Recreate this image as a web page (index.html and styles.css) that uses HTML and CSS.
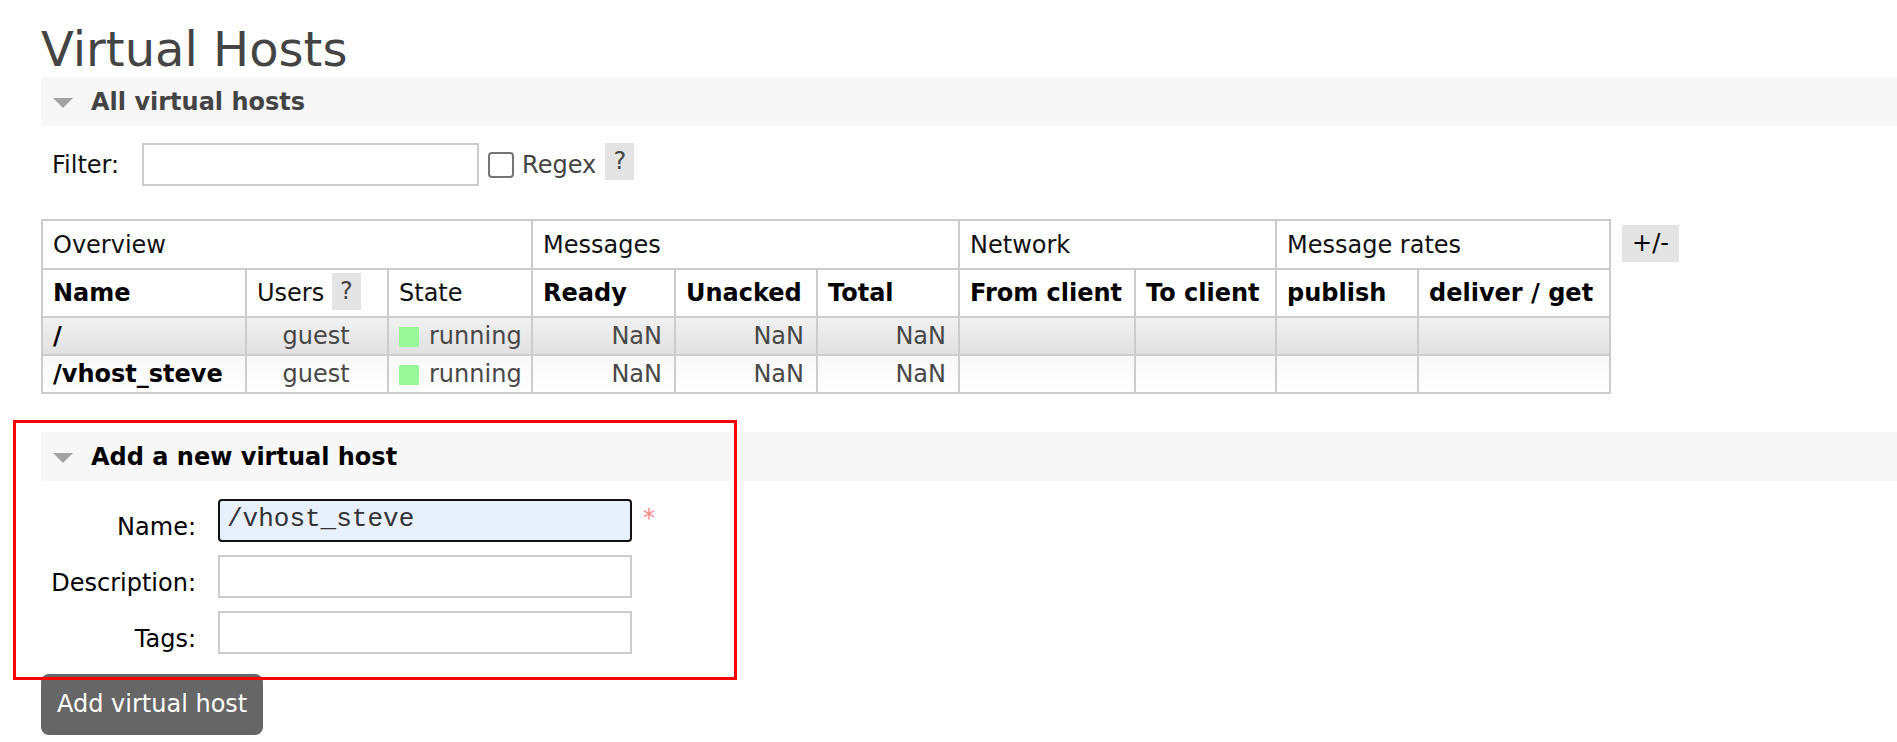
FILE: index.html
```html
<!DOCTYPE html>
<html lang="en">
<head>
<meta charset="utf-8">
<title>Virtual Hosts</title>
<link rel="stylesheet" href="styles.css">
</head>
<body>
<div class="page">
  <h1 class="title">Virtual Hosts</h1>

  <div class="section">
    <div class="section-head"><span class="tri"></span><h2>All virtual hosts</h2></div>
    <div class="filter">
      <label class="filter-label">Filter:</label>
      <input class="filter-input" type="text">
      <input class="regex-box" type="checkbox">
      <span class="regex">Regex</span>
      <span class="help">?</span>
    </div>
    <div class="table-wrap">
      <table class="list">
        <colgroup>
          <col class="c-name"><col class="c-users"><col class="c-state">
          <col class="c-ready"><col class="c-unacked"><col class="c-total">
          <col class="c-from"><col class="c-to">
          <col class="c-pub"><col class="c-deliver">
        </colgroup>
        <thead>
          <tr class="group-row">
            <th colspan="3">Overview</th>
            <th colspan="3">Messages</th>
            <th colspan="2">Network</th>
            <th colspan="2">Message rates</th>
          </tr>
          <tr class="head-row">
            <th>Name</th>
            <th class="normal">Users <span class="help">?</span></th>
            <th class="normal">State</th>
            <th>Ready</th>
            <th>Unacked</th>
            <th>Total</th>
            <th>From client</th>
            <th>To client</th>
            <th>publish</th>
            <th>deliver / get</th>
          </tr>
        </thead>
        <tbody>
          <tr class="alt1">
            <td class="name">/</td>
            <td class="center">guest</td>
            <td><span class="dot"></span>running</td>
            <td class="num">NaN</td>
            <td class="num">NaN</td>
            <td class="num">NaN</td>
            <td></td><td></td><td></td><td></td>
          </tr>
          <tr class="alt2">
            <td class="name">/vhost_steve</td>
            <td class="center">guest</td>
            <td><span class="dot"></span>running</td>
            <td class="num">NaN</td>
            <td class="num">NaN</td>
            <td class="num">NaN</td>
            <td></td><td></td><td></td><td></td>
          </tr>
        </tbody>
      </table>
      <span class="toggle">+/-</span>
    </div>
  </div>

  <div class="section section-add">
    <div class="section-head dark"><span class="tri"></span><h2>Add a new virtual host</h2></div>
    <form class="vform">
      <label class="flabel">Name:</label>
      <div class="fcell"><input class="tin focus" type="text" value="/vhost_steve"><span class="mand">*</span></div>
      <label class="flabel">Description:</label>
      <div class="fcell"><input class="tin" type="text"></div>
      <label class="flabel">Tags:</label>
      <div class="fcell"><input class="tin" type="text"></div>
    </form>
    <button class="btn" type="button">Add virtual host</button>
  </div>

  <div class="annot"></div>
</div>
</body>
</html>
```

FILE: styles.css
```css
* { box-sizing: border-box; }
html, body { margin: 0; padding: 0; background: #fff; }
body {
  font-family: "DejaVu Sans", Verdana, sans-serif;
  font-size: 24px;
  line-height: 28px;
  color: #484848;
}
.page { position: relative; padding: 22px 0 20px 41px; }

.title {
  margin: 0;
  font-size: 48px;
  font-weight: normal;
  line-height: 55px;
  color: #444;
}

.section-head {
  height: 49px;
  background: #f7f7f7;
  display: flex;
  align-items: center;
  padding-left: 12px;
}
.tri {
  width: 0;
  height: 0;
  border-left: 10.5px solid transparent;
  border-right: 10.5px solid transparent;
  border-top: 10px solid #a3a3a3;
  margin-right: 18px;
  margin-top: 2px;
}
.section-head h2 {
  margin: 0;
  font-size: 24px;
  line-height: 28px;
  font-weight: bold;
  color: #444;
}
.section-head.dark h2 { color: #000; }

/* filter */
.filter {
  display: flex;
  align-items: center;
  margin-top: 17px;
  padding-left: 11px;
  height: 43px;
}
.filter-label { color: #111; margin-right: 23px; }
.filter-input {
  width: 337px;
  height: 43px;
  margin: 0;
  border: 2px solid #ccc;
  padding: 0 7px;
  font: inherit;
  background: #fff;
}
.regex-box {
  appearance: none;
  -webkit-appearance: none;
  width: 26px;
  height: 26px;
  margin: 0 8px 0 9px;
  border: 2px solid #767676;
  border-radius: 4px;
  background: #fff;
}
.regex { color: #444; }
.help {
  display: inline-block;
  width: 29px;
  height: 37px;
  line-height: 37px;
  text-align: center;
  background: #e4e4e4;
  color: #444;
  font-weight: normal;
}
.filter .help { margin-left: 9px; align-self: flex-start; }

/* table */
.table-wrap {
  display: flex;
  align-items: flex-start;
  margin-top: 33px;
}
.list {
  border-collapse: collapse;
  table-layout: fixed;
  width: 1568px;
}
.c-name { width: 204px; }
.c-users { width: 142px; }
.c-state { width: 144px; }
.c-ready { width: 143px; }
.c-unacked { width: 142px; }
.c-total { width: 142px; }
.c-from { width: 176px; }
.c-to { width: 141px; }
.c-pub { width: 142px; }
.c-deliver { width: 192px; }

.list th, .list td {
  border: 2px solid #ccc;
  padding: 0 12px 0 10px;
  text-align: left;
  white-space: nowrap;
  line-height: 28px;
  overflow: hidden;
}
.group-row th { height: 49px; font-weight: normal; color: #111; }
.head-row th { height: 48px; color: #000; font-weight: bold; }
.head-row th.normal { font-weight: normal; color: #111; }
.head-row .help { vertical-align: middle; margin-top: -4px; }
.list td { height: 38px; color: #484848; }
.list td.name { font-weight: bold; color: #000; }
.list td.center { text-align: center; }
.list td.num { text-align: right; }
.alt1 td { background: linear-gradient(#f1f1f1, #e1e1e1); }
.alt2 td { background: linear-gradient(#f8f8f8, #ffffff); }
.dot {
  display: inline-block;
  width: 20px;
  height: 20px;
  background: #98f898;
  vertical-align: -3px;
  margin-right: 10px;
}
.toggle {
  display: inline-block;
  margin: 6px 0 0 11px;
  width: 57px;
  height: 37px;
  line-height: 37px;
  text-align: center;
  background: #e4e4e4;
  color: #000;
}

/* add form */
.section-add { margin-top: 38px; }
.vform {
  display: grid;
  grid-template-columns: 155px auto;
  justify-content: start;
  column-gap: 22px;
  row-gap: 13px;
  margin-top: 18px;
}
.flabel {
  text-align: right;
  padding-top: 14px;
  color: #000;
}
.fcell { display: flex; align-items: baseline; }
.tin {
  width: 414px;
  height: 43px;
  margin: 0;
  border: 2px solid #ccc;
  padding: 0 7px 3px;
  font-family: "Liberation Mono", "DejaVu Sans Mono", monospace;
  font-size: 26px;
  color: #333;
  background: #fff;
}
.tin.focus {
  border-color: #111;
  border-radius: 4px;
  background: #e8f0fe;
  outline: none;
}
.mand { color: #f88; margin-left: 11px; }

.btn {
  display: block;
  margin-top: 20px;
  padding: 16px 16px 17px;
  border: 0;
  border-radius: 8px;
  background: #666;
  color: #fff;
  font: inherit;
  line-height: 28px;
}

/* annotation overlay */
.annot {
  position: absolute;
  left: 13px;
  top: 420px;
  width: 724px;
  height: 260px;
  border: 3px solid #f00;
  pointer-events: none;
}
```
